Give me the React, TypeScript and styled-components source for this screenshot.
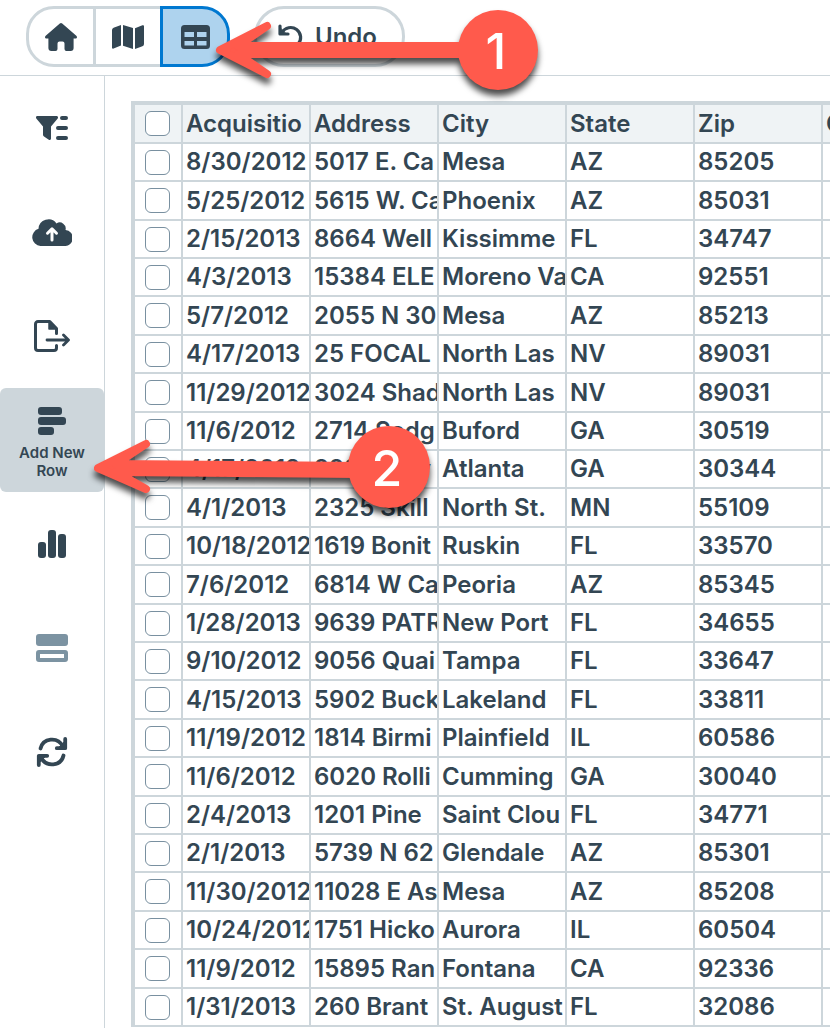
import React from 'react';
import styled, { createGlobalStyle } from 'styled-components';

const ink = '#334653';
const line = '#cdd6db';
const red = '#ff5a4c';

const GlobalStyle = createGlobalStyle`
  *, *::before, *::after { box-sizing: border-box; }
  body { margin: 0; background: #fff; color: ${ink}; font-family: Inter, "Liberation Sans", sans-serif; }
  button { font: inherit; color: inherit; cursor: pointer; }
`;

const Page = styled.div`
  position: relative;
  display: flex;
  flex-direction: column;
  height: 100vh;
  overflow: hidden;
`;

const Toolbar = styled.header`
  display: flex;
  flex: none;
  align-items: center;
  gap: 24px;
  height: 76px;
  padding: 0 26px 2px;
  border-bottom: 1px solid ${line};
`;

const ViewSwitch = styled.div`
  display: flex;
`;

const ViewButton = styled.button<{ $place: 'first' | 'middle' | 'last' }>`
  display: flex;
  align-items: center;
  justify-content: center;
  width: ${p => (p.$place === 'middle' ? 64 : 70)}px;
  height: 61px;
  padding: 0;
  border: 3px solid ${p => (p.$place === 'last' ? '#0078d0' : line)};
  border-width: ${p => (p.$place === 'middle' ? '3px 0' : '3px')};
  border-radius: ${p => ({ first: '28px 0 0 28px', middle: '0', last: '0 28px 28px 0' })[p.$place]};
  background: ${p => (p.$place === 'last' ? '#aed3ee' : '#fff')};
`;

const UndoButton = styled.button`
  display: flex;
  align-items: center;
  gap: 12px;
  height: 61px;
  padding: 0 25px 0 20px;
  border: 3px solid ${line};
  border-radius: 30px;
  background: #fff;
  font-size: 24px;
  font-weight: 600;
`;

const Body = styled.div`
  display: flex;
  flex: 1;
  min-height: 0;
`;

const Sidebar = styled.nav`
  flex: none;
  width: 105px;
  border-right: 1px solid ${line};
`;

const SideButton = styled.button<{ $active?: boolean }>`
  display: flex;
  flex-direction: column;
  align-items: center;
  justify-content: center;
  gap: 9px;
  width: 104px;
  height: 104px;
  padding: ${p => (p.$active ? '7px 8px 0' : '0 8px')};
  border: 0;
  border-radius: 6px;
  background: ${p => (p.$active ? line : 'transparent')};
  font-size: 15px;
  font-weight: 600;
  line-height: 18px;
`;

const Main = styled.main`
  flex: 1;
  min-width: 0;
  padding: 25px 0 0 26px;
  overflow: hidden;
`;

const Grid = styled.table`
  table-layout: fixed;
  width: 820px;
  border: 4px solid ${line};
  border-width: 4px 0 0 4px;
  border-collapse: separate;
  border-spacing: 0;
  font-size: 24px;
  line-height: 36px;
`;

const Row = styled.tr`
  height: 38px;
  &:nth-child(5n + 2), &:nth-child(5n) { height: 39px; }
`;

const HeadRow = styled.tr`
  height: 39px;
  background: #eff3f5;
`;

const Cell = styled.td`
  padding: 0 0 0 3px;
  border: solid ${line};
  border-width: 0 2px 2px 0;
  font-weight: 600;
  text-align: left;
  white-space: nowrap;
  overflow: hidden;
`;

const CheckCell = styled(Cell)`
  width: 48px;
  padding: 0 0 0 10px;
`;

const Check = styled.input`
  display: block;
  appearance: none;
  width: 25px;
  height: 25px;
  margin: 0;
  border: 1px solid #7990a0;
  border-radius: 6px;
  background: #fff;
`;

const Annotations = styled.svg`
  position: absolute;
  top: 0;
  left: 0;
  overflow: visible;
  pointer-events: none;
  filter: drop-shadow(0 6px 3px rgba(0, 0, 0, 0.7));
`;

const Num = styled.text`
  fill: #fff;
  font-family: Inter, sans-serif;
  font-size: 50px;
  font-weight: 500;
  text-anchor: middle;
`;

const stroke = { fill: 'none', stroke: ink, strokeLinecap: 'round', strokeLinejoin: 'round' } as const;

const HomeIcon = () => (
  <svg width="32" height="30" viewBox="0 0 32 30" fill={ink}>
    <path d="M14.8 1.5a1.9 1.9 0 0 1 2.4 0L31.300 13.800c1.300 1.200.700 2.800-1 2.800H28.600V26a3 3 0 0 1-3 3H21.500a2 2 0 0 1-2-2v-5.500a2 2 0 0 0-2-2h-3a2 2 0 0 0-2 2V27a2 2 0 0 1-2 2H6.400a3 3 0 0 1-3-3v-9.400H1.700c-1.700 0-2.300-1.600-1-2.800z" />
  </svg>
);

const MapIcon = () => (
  <svg width="32" height="24" viewBox="0 0 32 24" fill={ink}>
    <path d="M9 0v20.500L1.600 23.600A1.100 1.100 0 0 1 0 22.600V5a2.500 2.500 0 0 1 1.600-2.300z" />
    <path d="M11 0l10 3v21l-10-3.200z" />
    <path d="M23 3.200 30.400.300A1.100 1.100 0 0 1 32 1.300V19a2.500 2.500 0 0 1-1.600 2.300L23 24z" />
  </svg>
);

const TableIcon = () => (
  <svg width="29" height="24" viewBox="0 0 29 24" fill={ink}>
    <path fillRule="evenodd" d="M3.500 0h22A3.500 3.500 0 0 1 29 3.500v17a3.500 3.500 0 0 1-3.500 3.500h-22A3.500 3.500 0 0 1 0 20.500v-17A3.500 3.500 0 0 1 3.500 0zM3.500 7v5H13V7zM16 7v5h9.500V7zM3.500 16v4.500H13V16zM16 16v4.500h9.500V16z" />
  </svg>
);

const UndoIcon = () => (
  <svg width="26" height="26" viewBox="0 0 26 26" {...stroke} strokeWidth="3.200">
    <path d="M5 8.500A10 10 0 1 1 6 20" />
    <path d="M3 2v8h8" />
    <path d="M3 4v6h6z" fill={ink} strokeWidth="1" />
  </svg>
);

const FilterIcon = () => (
  <svg width="32" height="24" viewBox="0 0 32 24" fill={ink}>
    <path d="M1.500 0h19c1.500 0 2 1.600 1 2.800L15 10.500V22.500c0 1.300-1.200 1.900-2.200 1.200L8 20.500a2 2 0 0 1-1-1.700V10.500L.500 2.800C-.500 1.600 0 0 1.500 0z" />
    <path d="M26 2h4M22 12h8M22 22h8" {...stroke} strokeWidth="4" />
  </svg>
);

const CloudIcon = () => (
  <svg width="40" height="28" viewBox="0 0 40 28" fill={ink}>
    <path d="M8.500 28a8.800 8.800 0 0 1-2-17.200A10 10 0 0 1 24.500 5.400A6 6 0 0 1 33.500 12A8 8 0 0 1 32 28z" />
    <path d="M20 22V11.500M15.500 15.200 20 10.800l4.500 4.400" fill="none" stroke="#fff" strokeWidth="3" strokeLinecap="round" strokeLinejoin="round" />
  </svg>
);

const ExportIcon = () => (
  <svg width="36" height="32" viewBox="0 0 36 32" {...stroke}>
    <path d="M22.500 13.500V8.500L15.800 1.500H4A2.500 2.500 0 0 0 1.500 4v24A2.500 2.500 0 0 0 4 30.500H20a2.500 2.500 0 0 0 2.500-2.500v-2.500" strokeWidth="3" />
    <path d="M15 2v7h7z" fill={ink} strokeWidth="1.500" />
    <path d="M13 20H34M29.500 15l5 5-5 5" strokeWidth="2.800" />
  </svg>
);

const RowsIcon = () => (
  <svg width="28" height="28" viewBox="0 0 28 28" fill={ink}>
    <rect width="24" height="8" rx="3" />
    <rect y="10" width="28" height="8" rx="3" />
    <rect y="20" width="16" height="8" rx="3" />
  </svg>
);

const ChartIcon = () => (
  <svg width="28" height="28" viewBox="0 0 28 28" fill={ink}>
    <rect y="12" width="8" height="16" rx="3" />
    <rect x="10" width="8" height="28" rx="3" />
    <rect x="20" y="4" width="8" height="24" rx="3" />
  </svg>
);

const CardsIcon = () => (
  <svg width="32" height="28" viewBox="0 0 32 28">
    <rect width="32" height="12" rx="3" fill="#7c93a2" />
    <path fill="#7c93a2" fillRule="evenodd" d="M3 16h26a3 3 0 0 1 3 3v6a3 3 0 0 1-3 3H3a3 3 0 0 1-3-3v-6a3 3 0 0 1 3-3zM4 20v4h24v-4z" />
  </svg>
);

const RefreshIcon = () => (
  <svg width="32" height="32" viewBox="0 0 32 32" {...stroke} strokeWidth="3.800">
    <path d="M4.500 12.500C7 2 21.500 0 27 10.500M29.200 3v9.200H20.800" />
    <path d="M27.500 19.500C25 30 10.500 32 5 21.500M2.800 29v-9.200H11.200" />
    <path d="M28.500 6v5.500H23zM3.500 26v-5.500H9z" fill={ink} strokeWidth="1" />
  </svg>
);

const tools = [
  { name: 'Filter', icon: <FilterIcon /> },
  { name: 'Upload', icon: <CloudIcon /> },
  { name: 'Export', icon: <ExportIcon /> },
  { name: 'Add New Row', icon: <RowsIcon />, active: true },
  { name: 'Charts', icon: <ChartIcon /> },
  { name: 'Cards', icon: <CardsIcon /> },
  { name: 'Refresh', icon: <RefreshIcon /> },
];

const columns = ['Acquisitio', 'Address', 'City', 'State', 'Zip', 'C'];

const rows = [
  ['8/30/2012', '5017 E. Ca', 'Mesa', 'AZ', '85205'],
  ['5/25/2012', '5615 W. Ca', 'Phoenix', 'AZ', '85031'],
  ['2/15/2013', '8664 Well', 'Kissimme', 'FL', '34747'],
  ['4/3/2013', '15384 ELE', 'Moreno Va', 'CA', '92551'],
  ['5/7/2012', '2055 N 30', 'Mesa', 'AZ', '85213'],
  ['4/17/2013', '25 FOCAL', 'North Las', 'NV', '89031'],
  ['11/29/2012', '3024 Shad', 'North Las', 'NV', '89031'],
  ['11/6/2012', '2714 Sedg', 'Buford', 'GA', '30519'],
  ['4/17/2013', '2281 Harv', 'Atlanta', 'GA', '30344'],
  ['4/1/2013', '2325 Skill', 'North St.', 'MN', '55109'],
  ['10/18/2012', '1619 Bonit', 'Ruskin', 'FL', '33570'],
  ['7/6/2012', '6814 W Ca', 'Peoria', 'AZ', '85345'],
  ['1/28/2013', '9639 PATR', 'New Port', 'FL', '34655'],
  ['9/10/2012', '9056 Quai', 'Tampa', 'FL', '33647'],
  ['4/15/2013', '5902 Buck', 'Lakeland', 'FL', '33811'],
  ['11/19/2012', '1814 Birmi', 'Plainfield', 'IL', '60586'],
  ['11/6/2012', '6020 Rolli', 'Cumming', 'GA', '30040'],
  ['2/4/2013', '1201 Pine', 'Saint Clou', 'FL', '34771'],
  ['2/1/2013', '5739 N 62', 'Glendale', 'AZ', '85301'],
  ['11/30/2012', '11028 E As', 'Mesa', 'AZ', '85208'],
  ['10/24/2012', '1751 Hicko', 'Aurora', 'IL', '60504'],
  ['11/9/2012', '15895 Ran', 'Fontana', 'CA', '92336'],
  ['1/31/2013', '260 Brant', 'St. August', 'FL', '32086'],
];

const Arrow = ({ d }: { d: string }) => (
  <path d={d} fill={red} stroke={red} strokeWidth="8" strokeLinejoin="round" />
);

export default function App() {
  return (
    <Page>
      <GlobalStyle />
      <Toolbar>
        <ViewSwitch>
          <ViewButton $place="first" aria-label="Home"><HomeIcon /></ViewButton>
          <ViewButton $place="middle" aria-label="Map view"><MapIcon /></ViewButton>
          <ViewButton $place="last" aria-label="Table view" aria-pressed="true"><TableIcon /></ViewButton>
        </ViewSwitch>
        <UndoButton><UndoIcon />Undo</UndoButton>
      </Toolbar>
      <Body>
        <Sidebar>
          {tools.map(t => (
            <SideButton key={t.name} $active={t.active} aria-label={t.name}>
              {t.icon}
              {t.active && <span>{t.name}</span>}
            </SideButton>
          ))}
        </Sidebar>
        <Main>
          <Grid>
            <thead>
              <HeadRow>
                <CheckCell as="th"><Check type="checkbox" aria-label="Select all rows" /></CheckCell>
                {columns.map(c => <Cell as="th" key={c} scope="col">{c}</Cell>)}
              </HeadRow>
            </thead>
            <tbody>
              {rows.map((r, i) => (
                <Row key={i}>
                  <CheckCell><Check type="checkbox" aria-label={`Select row ${i + 1}`} /></CheckCell>
                  {r.map((v, j) => <Cell key={j}>{v}</Cell>)}
                  <Cell />
                </Row>
              ))}
            </tbody>
          </Grid>
        </Main>
      </Body>
      <Annotations width="540" height="520" viewBox="0 0 540 520" aria-hidden="true">
        <Arrow d="M220 50L267 26L238 46H470V54H238L267 74Z" />
        <circle cx="498" cy="50" r="40" fill={red} />
        <Num x="496" y="69">1</Num>
        <Arrow d="M98 468L146 444L116 464L360 466V474L116 472L146 489Z" />
        <circle cx="389" cy="467" r="41" fill={red} />
        <Num x="387" y="486">2</Num>
      </Annotations>
    </Page>
  );
}
